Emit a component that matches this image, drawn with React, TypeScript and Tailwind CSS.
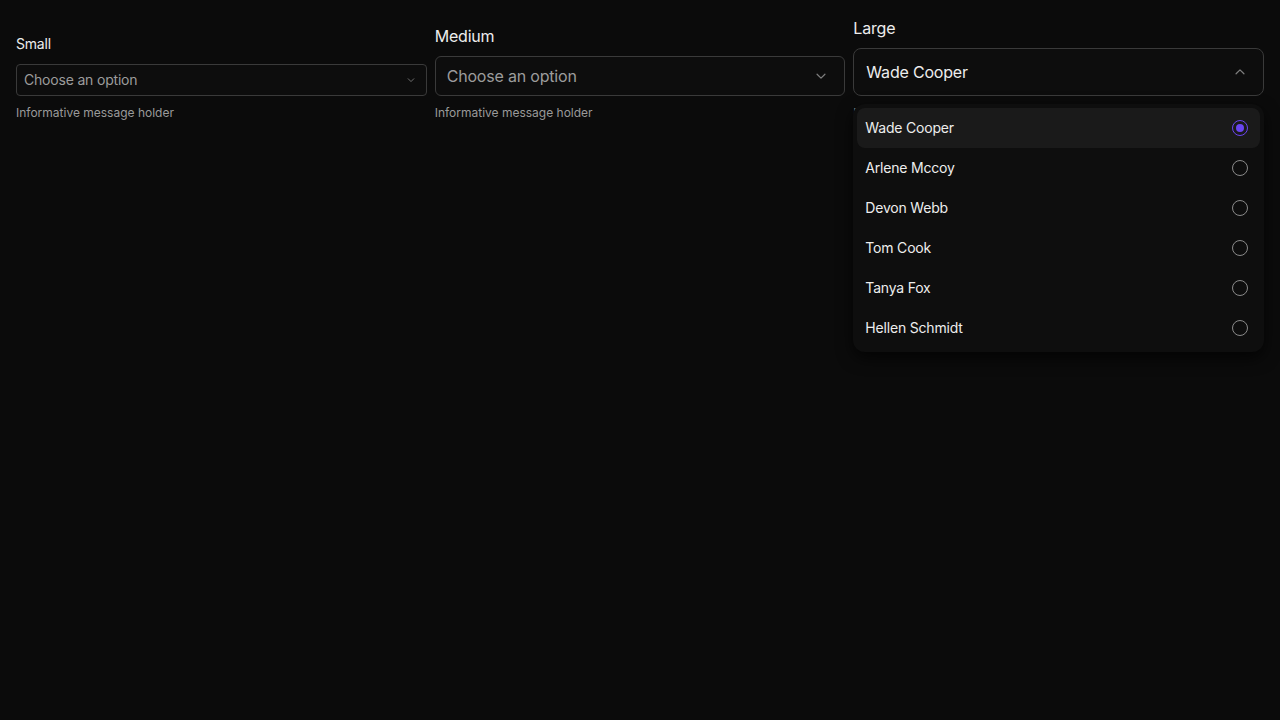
import { useState } from "react";

const people = [
  "Wade Cooper",
  "Arlene Mccoy",
  "Devon Webb",
  "Tom Cook",
  "Tanya Fox",
  "Hellen Schmidt",
];

function Chevron({ up, size }: { up?: boolean; size: number }) {
  return (
    <svg
      width={size}
      height={size}
      viewBox="0 0 16 16"
      fill="none"
      stroke="#7e7e7e"
      strokeWidth={1.4}
      strokeLinecap="round"
      strokeLinejoin="round"
    >
      {up ? <path d="M3.5 10 8 5.5 12.5 10" /> : <path d="M3.5 6 8 10.5 12.5 6" />}
    </svg>
  );
}

function Radio({ checked }: { checked: boolean }) {
  return checked ? (
    <span className="flex h-4 w-4 items-center justify-center rounded-full border-[1.5px] border-[#6a45f0]">
      <span className="h-2 w-2 rounded-full bg-[#6a45f0]" />
    </span>
  ) : (
    <span className="h-4 w-4 rounded-full border-[1.5px] border-[#8a8a8a]" />
  );
}

export default function App() {
  const [selected, setSelected] = useState("Wade Cooper");

  return (
    <div
      className="min-h-screen w-full bg-[#0b0b0b] p-4 tracking-[-0.012em]"
      style={{ fontFamily: "Inter, 'Noto Sans', sans-serif" }}
    >
      <div className="grid grid-cols-3 items-end gap-2">
        {/* Small */}
        <div className="flex flex-col">
          <label className="mb-[10px] text-sm leading-5 text-[#ededed]">Small</label>
          <button className="flex h-8 w-full items-center justify-between rounded-[4px] border border-[#3a3a3a] bg-[#0d0d0d] pl-[7px] pr-2 text-sm text-[#9c9c9c]">
            <span>Choose an option</span>
            <span className="mr-[2px]">
              <Chevron size={10} />
            </span>
          </button>
        </div>

        {/* Medium */}
        <div className="flex flex-col">
          <label className="mb-2 text-base leading-6 text-[#ededed]">Medium</label>
          <button className="flex h-10 w-full items-center justify-between rounded-[6px] border border-[#3a3a3a] bg-[#0d0d0d] pl-[11px] pr-3 text-base text-[#9c9c9c]">
            <span>Choose an option</span>
            <span className="mr-1">
              <Chevron size={14} />
            </span>
          </button>
        </div>

        {/* Large */}
        <div className="relative flex flex-col">
          <label className="mb-2 text-base leading-6 text-[#ededed]">Large</label>
          <button className="flex h-12 w-full items-center justify-between rounded-lg border border-[#3a3a3a] bg-[#0d0d0d] px-3 text-base text-[#ededed]">
            <span>{selected}</span>
            <span className="mr-1">
              <Chevron up size={14} />
            </span>
          </button>
          <div className="absolute left-0 right-0 top-full mt-2 rounded-xl bg-[#0e0e0e] p-1 shadow-[0_6px_16px_rgba(0,0,0,0.7)]">
            {people.map((p) => (
              <div
                key={p}
                onClick={() => setSelected(p)}
                className={`flex h-10 cursor-pointer items-center justify-between rounded-lg pl-2 pr-3 text-sm text-[#ededed] ${
                  p === selected ? "bg-[#1a1a1a]" : ""
                }`}
              >
                <span>{p}</span>
                <Radio checked={p === selected} />
              </div>
            ))}
          </div>
        </div>
      </div>

      <div className="mt-[9px] grid grid-cols-3 gap-2 tracking-normal">
        <p className="text-xs leading-4 text-[#9a9a9a]">Informative message holder</p>
        <p className="text-xs leading-4 text-[#9a9a9a]">Informative message holder</p>
        <p className="text-xs leading-4 text-[#9a9a9a]">Informative message holder</p>
      </div>
    </div>
  );
}
